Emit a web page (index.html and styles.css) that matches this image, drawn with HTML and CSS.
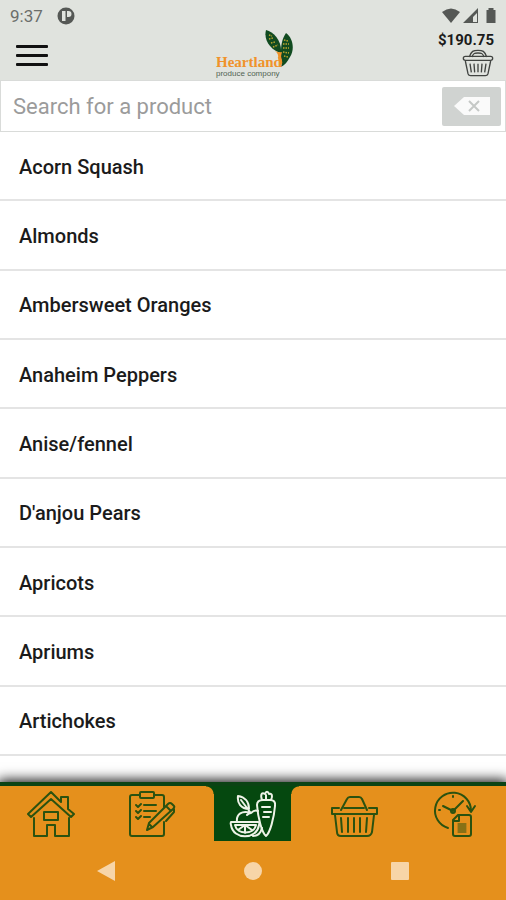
FILE: index.html
```html
<!DOCTYPE html>
<html lang="en">
<head>
<meta charset="utf-8">
<meta name="viewport" content="width=device-width, initial-scale=1">
<title>Heartland Produce Company</title>
<link rel="stylesheet" href="styles.css">
</head>
<body>
<header class="top">
  <div class="status">
    <span class="time">9:37</span>
    <svg class="app-badge" width="18" height="18" viewBox="0 0 18 18"><circle cx="9" cy="9" r="8.5" fill="#555855"/><path d="M5 4h3.500v10H5zM10 4h1.500a3 3 0 0 1 0 6H10z" fill="#e0e3de"/></svg>
    <svg class="signals" width="56" height="18" viewBox="0 0 56 18" fill="#555855"><path d="M0 5q9-7 18 0L9 16z"/><path d="M36 1v15H21zm-1 5-4 4v5h4z" fill-rule="evenodd"/><path d="M44.500 3h2V1h5v2h2v13h-9z"/></svg>
  </div>
  <div class="bar">
    <button class="menu" aria-label="Menu"><span></span><span></span><span></span></button>
    <div class="logo">
      <svg class="leaves" width="30" height="40" viewBox="0 0 30 40">
        <path d="M2 1C10 3 18 12 17 24 8 22-1 12 2 1z" fill="#114b20"/>
        <path d="M22 4c7 5 9 16 4 24-3 5-5 8-9 10 2-6-1-8 0-14 0-8 1-14 5-20z" fill="#114b20"/>
        <path d="M5 6l3 1M5 10l4-1M7 14l4-1M9 18l5-2M20 11l4 1M19 15l6 0M19 19l6 0M19 23l6 1M20 27l4 1" stroke="#bda62d" stroke-width="1.500" stroke-dasharray="1.500 1"/>
        <path d="M11 22q4 2 7 1q-1 3-1 6q3 5-1 8l-1-1q1-3-1-7q1-4-3-7z" fill="#ef9228"/>
      </svg>
      <span class="name">Heartland</span>
      <span class="sub">produce compony</span>
    </div>
    <a class="cart" href="#cart">
      <span>$190.75</span>
      <svg width="32" height="28" viewBox="0 0 48 42" fill="none" stroke="#414441" stroke-width="2"><path d="M11 12C14 3 17 2 24 2s10 1 13 10M15 12C17 6 19 6 24 6s7 0 9 6"/><rect x="2" y="11" width="44" height="6" rx="3"/><path d="M5 18l4 19q1 3 4 3h22q3 0 4-3l4-19M12 22l2 13M18 22l1 13M24 22v13M30 22l-1 13M36 22l-2 13"/></svg>
    </a>
  </div>
</header>
<form class="search">
  <input type="text" placeholder="Search for a product" aria-label="Search for a product">
  <button type="button" aria-label="Clear search"><svg width="38" height="20" viewBox="0 0 38 20"><path d="M1 10 11 1h26v18H11z" fill="#fafafa"/><path d="m16 5 10 10M26 5 16 15" stroke="#c5c8c6" stroke-width="2"/></svg></button>
</form>
<main class="list-area">
  <ul class="products">
    <li>Acorn Squash</li>
    <li>Almonds</li>
    <li>Ambersweet Oranges</li>
    <li>Anaheim Peppers</li>
    <li>Anise/fennel</li>
    <li>D'anjou Pears</li>
    <li>Apricots</li>
    <li>Apriums</li>
    <li>Artichokes</li>
  </ul>
</main>
<footer class="bottom">
  <nav class="tabs">
    <a href="#home" aria-label="Home"><svg viewBox="0 0 48 48"><path d="M24 2 34 12V7h7v12l6 5-3 3L24 9 4 27l-3-3zM7 28v18h13V35h8v11h14V28"/><rect x="17" y="22" width="14" height="8"/></svg></a>
    <a href="#orders" aria-label="Orders"><svg viewBox="0 0 48 48"><path d="M12 5H4q-2 0-2 2v37q0 2 2 2h30q2 0 2-2V32M26 5h8q2 0 2 2v10"/><rect x="12" y="2" width="14" height="6" rx="1"/><path d="m8 15 2 2 3-3M8 21l2 2 3-3M8 27l2 2 3-3M16 15h12M16 21h12M16 27h6M19 40l2-7 19-19q2-2 4 0l2 2q1 1-1 3L25 37zM38 16l5 5M46 19v3l-8 9M21 34l3 3"/></svg></a>
    <a href="#products" class="active" aria-label="Products" aria-current="page"><svg viewBox="0 0 48 48"><path d="M20 19C12 19 8 13 9 6c7 1 11 6 11 13zM12 10l9 12M8 32c-1-8 5-12 14-9 3-3 5-3 7-2M22 23c-2 0-3 1-4 2"/><path d="M2 32h27q2 0 1 3c-2 15-26 15-28 0q-1-3 1-3zM6 35c2 10 19 10 21 0zM16 35v8M16 35l-7 5M16 35l7 5M24 46c5 0 8-4 9-8"/><path d="M37 46c-4-3-8-18-9-31q0-5 6-5h7q6 0 5 6c-1 12-5 27-9 30zM33 10c-2-6 0-8 3-6 1-3 3-3 4 0 3-1 4 2 2 6M37 5v5M33 17h8M35 22h7M34 27h6"/></svg></a>
    <a href="#basket" aria-label="Basket"><svg viewBox="0 0 48 48"><path d="m11 20 6-11q1-2 3-2h9q2 0 3 2l5 11"/><path d="M14 18h20M9 18H2v6h45v-6h-8M5 25l2 17q0 4 4 4h26q4 0 5-4l2-17M11 28l1 14M18 28v14M24 28v14M30 28v14M37 28l-1 14"/></svg></a>
    <a href="#history" aria-label="Order history"><svg viewBox="0 0 48 48"><path d="M17 38A18 18 0 1 1 40 21M36 16l4 6 4-6M12 16l10 5 10-10M22 6v1M8 20h1"/><circle cx="22" cy="21" r="2"/><path d="M27 25h11q2 0 2 2v17q0 2-2 2H24q-2 0-2-2V30zM28 25v6h-6"/><path class="fine" d="M27 34h8M27 36h8M27 38h8M27 40h8M27 42h8"/></svg></a>
  </nav>
  <div class="system">
    <button aria-label="Back"><svg width="20" height="20" viewBox="0 0 20 20"><path d="M19 0v20L1 10z"/></svg></button>
    <button aria-label="Home screen"><svg width="20" height="20" viewBox="0 0 20 20"><circle cx="10" cy="10" r="9"/></svg></button>
    <button aria-label="Recent apps"><svg width="20" height="20" viewBox="0 0 20 20"><rect x="1" y="1" width="18" height="18" rx="1"/></svg></button>
  </div>
</footer>
</body>
</html>
```
FILE: styles.css
```css
* { box-sizing: border-box; }

body {
  margin: 0;
  min-height: 100vh;
  display: flex;
  flex-direction: column;
  background: #fff;
  color: #1b1b1b;
  font-family: Roboto, "Liberation Sans", sans-serif;
}

button { border: 0; padding: 0; background: none; }
svg { display: block; }
a { color: inherit; text-decoration: none; }

.top { background: #e0e3de; }

.status {
  display: flex;
  align-items: center;
  height: 32px;
  padding: 0 8px 0 10px;
}
.time { font-size: 17px; color: #6b6e6b; }
.app-badge { margin-left: 14px; }
.signals { margin-left: auto; }

.bar {
  display: grid;
  grid-template-columns: 1fr auto 1fr;
  height: 48px;
  padding: 0 12px 0 16px;
}

.menu {
  display: flex;
  flex-direction: column;
  gap: 6px;
  justify-self: start;
  align-self: start;
  padding-top: 13px;
}
.menu span { width: 32px; height: 3px; border-radius: 1px; background: #111; }

.logo {
  position: relative;
  display: flex;
  flex-direction: column;
  padding-top: 22px;
  width: 78px;
}
.leaves { position: absolute; right: 0; top: -3px; }
.name {
  position: relative;
  font: bold 15px/16px "Liberation Serif", serif;
  color: #f0922b;
}
.sub { font: 8px/8px "Liberation Sans", sans-serif; color: #526353; white-space: nowrap; }

.cart {
  display: flex;
  flex-direction: column;
  align-items: flex-end;
  font-size: 15px;
  line-height: 17px;
  font-weight: 700;
}

.search {
  display: flex;
  align-items: center;
  height: 52px;
  padding: 0 4px 0 0;
  border: 1px solid #d9dbd9;
}
.search input {
  flex: 1;
  min-width: 0;
  height: 100%;
  padding: 0 12px;
  border: 0;
  outline: 0;
  background: none;
  font: 22px Roboto, "Liberation Sans", sans-serif;
  color: #1b1b1b;
}
.search input::placeholder { color: #9b9b9b; }
.search button {
  display: grid;
  place-items: center;
  width: 59px;
  height: 39px;
  border-radius: 2px;
  background: #d0d3d1;
}

.list-area {
  flex: 1;
  display: flex;
  padding-bottom: 26px;
}
.products {
  flex: 1;
  display: flex;
  flex-direction: column;
  margin: 0;
  padding: 0;
  list-style: none;
}
.products li {
  flex: 1;
  display: flex;
  align-items: center;
  padding: 2px 19px 0;
  border-bottom: 2px solid #e4e4e4;
  font-size: 20px;
  font-weight: 500;
}

.bottom {
  background: #e5901c;
  border-top: 4px solid #0b4314;
  box-shadow: 0 0 12px 2px #111;
}
.tabs {
  display: grid;
  grid-template-columns: repeat(5, 1fr);
  justify-items: center;
}
.tabs a {
  position: relative;
  display: flex;
  justify-content: center;
  width: 77px;
  height: 55px;
  padding-top: 4px;
}
.tabs svg {
  width: 48px;
  height: 48px;
  fill: none;
  stroke: #2b5210;
  stroke-width: 2;
  stroke-linejoin: round;
  stroke-linecap: round;
}
.tabs .fine { stroke-width: 1; }
.tabs .active { background: #05480f; }
.tabs .active svg { stroke: #eef3e8; }
.tabs .active::before,
.tabs .active::after {
  content: "";
  position: absolute;
  top: 0;
  width: 8px;
  height: 8px;
}
.tabs .active::before {
  right: 100%;
  background: radial-gradient(circle at 0 100%, #e5901c 7px, #05480f 8px);
}
.tabs .active::after {
  left: 100%;
  background: radial-gradient(circle at 100% 100%, #e5901c 7px, #05480f 8px);
}

.system {
  display: grid;
  grid-template-columns: repeat(3, 1fr);
  height: 59px;
  padding: 0 33px;
}
.system button { display: grid; place-items: center; }
.system svg { fill: #f7d5a8; }
```
